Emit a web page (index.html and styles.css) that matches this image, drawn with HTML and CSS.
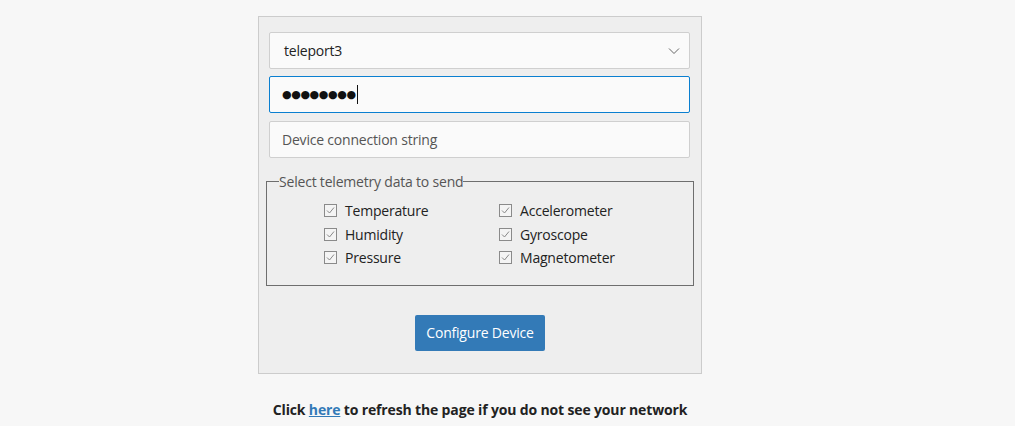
FILE: index.html
```html
<!DOCTYPE html>
<html>
<head>
<meta charset="utf-8">
<link rel="stylesheet" href="styles.css">
</head>
<body>
<div class="page">
  <div class="panel">
    <div class="field select">
      <span class="value">teleport3</span>
      <svg class="chev" width="12" height="8" viewBox="0 0 12 8"><path d="M1 1.5 L6 6.5 L11 1.5" fill="none" stroke="#555" stroke-width="0.9"/></svg>
    </div>
    <div class="field focused">
      <span class="dots">●●●●●●●●</span><span class="caret"></span>
    </div>
    <div class="field conn">
      <span class="placeholder">Device connection string</span>
    </div>
    <fieldset class="telemetry">
      <legend>Select telemetry data to send</legend>
      <div class="grid">
        <label class="check"><span class="box"><svg width="9" height="9" viewBox="0 0 9 9"><path d="M1 4.5 L3.5 7 L8 1.5" fill="none" stroke="#888" stroke-width="1"/></svg></span>Temperature</label>
        <label class="check"><span class="box"><svg width="9" height="9" viewBox="0 0 9 9"><path d="M1 4.5 L3.5 7 L8 1.5" fill="none" stroke="#888" stroke-width="1"/></svg></span>Accelerometer</label>
        <label class="check"><span class="box"><svg width="9" height="9" viewBox="0 0 9 9"><path d="M1 4.5 L3.5 7 L8 1.5" fill="none" stroke="#888" stroke-width="1"/></svg></span>Humidity</label>
        <label class="check"><span class="box"><svg width="9" height="9" viewBox="0 0 9 9"><path d="M1 4.5 L3.5 7 L8 1.5" fill="none" stroke="#888" stroke-width="1"/></svg></span>Gyroscope</label>
        <label class="check"><span class="box"><svg width="9" height="9" viewBox="0 0 9 9"><path d="M1 4.5 L3.5 7 L8 1.5" fill="none" stroke="#888" stroke-width="1"/></svg></span>Pressure</label>
        <label class="check"><span class="box"><svg width="9" height="9" viewBox="0 0 9 9"><path d="M1 4.5 L3.5 7 L8 1.5" fill="none" stroke="#888" stroke-width="1"/></svg></span>Magnetometer</label>
      </div>
    </fieldset>
    <div class="actions">
      <button class="btn">Configure Device</button>
    </div>
  </div>
  <p class="note">Click <a href="#">here</a> to refresh the page if you do not see your network</p>
</div>
</body>
</html>
```
FILE: styles.css
```css
html, body {
  margin: 0;
  padding: 0;
  background: #f7f7f7;
  font-family: "Open Sans", "Noto Sans", sans-serif;
  color: #222;
}
.page {
  width: 444px;
  margin-left: 258px;
  padding-top: 16px;
}
.panel {
  box-sizing: border-box;
  width: 444px;
  height: 358px;
  border: 1px solid #cccccc;
  background: #eeeeee;
  padding: 15px 11px 0 10px;
}
.field {
  box-sizing: border-box;
  height: 37px;
  border: 1px solid #cfcfcf;
  border-radius: 2px;
  background: #fafafa;
  display: flex;
  align-items: center;
  padding: 0 14px;
  font-size: 14px;
  margin-bottom: 8px;
  letter-spacing: -0.2px;
}
.select {
  justify-content: space-between;
  margin-bottom: 7px;
  padding-right: 9px;
}
.select .value { color: #222; }
.focused {
  border-color: #0a7fd0;
  padding-left: 12px;
}
.conn { padding-left: 12px; }
.dots {
  font-family: "DejaVu Sans", sans-serif;
  font-size: 11px;
  letter-spacing: -0.4px;
  color: #111;
}
.caret {
  display: inline-block;
  width: 1px;
  height: 19px;
  background: #111;
  margin-left: 1px;
}
.placeholder { color: #555; }
.telemetry {
  margin: 14px -4px 0 -3px;
  padding: 2px 0 16px 0;
  border: 1px solid #6e6e6e;
}
.telemetry legend {
  font-size: 14px;
  color: #555;
  padding: 0;
  margin-left: 12px;
  letter-spacing: -0.2px;
}
.grid {
  display: grid;
  grid-template-columns: 175px 175px;
  row-gap: 2px;
  padding-left: 57px;
  padding-top: 7px;
}
.check {
  display: flex;
  align-items: center;
  font-size: 14px;
  color: #222;
  height: 21.5px;
  letter-spacing: -0.2px;
}
.box {
  box-sizing: border-box;
  width: 13px;
  height: 13px;
  border: 1px solid #8a8a8a;
  background: #f4f4f4;
  margin-right: 8px;
  display: flex;
  align-items: center;
  justify-content: center;
}
.actions {
  display: flex;
  justify-content: center;
  padding-top: 29px;
}
.btn {
  width: 130px;
  height: 36px;
  background: #337ab7;
  color: #fff;
  border: none;
  border-radius: 2px;
  font-family: "Open Sans", "Noto Sans", sans-serif;
  font-size: 14px;
  letter-spacing: -0.2px;
  margin-left: 1px;
}
.note {
  text-align: center;
  font-size: 14px;
  font-weight: bold;
  color: #222;
  margin: 26px 0 0 0;
  letter-spacing: -0.15px;
}
.note a {
  color: #337ab7;
}
```
